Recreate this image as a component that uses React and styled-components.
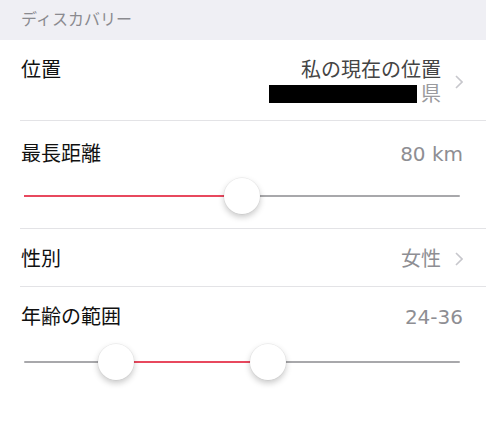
import styled, { createGlobalStyle } from "styled-components";

const GlobalStyle = createGlobalStyle`
  html, body {
    margin: 0;
    padding: 0;
    background: #ffffff;
  }
  body {
    font-family: "Liberation Sans", "Noto Sans CJK JP", sans-serif;
    -webkit-font-smoothing: antialiased;
  }
`;

const Page = styled.div`
  width: 486px;
  height: 428px;
  background: #ffffff;
  overflow: hidden;
`;

const SectionHeader = styled.div`
  height: 40px;
  background: #efeff4;
  color: #8a8a8f;
  font-size: 16px;
  line-height: 40px;
  padding-left: 21px;
  box-sizing: border-box;
`;

const Cell = styled.div`
  margin-left: 20px;
  padding: ${p => p.$pad || "18px 23px 16px 1px"};
  border-bottom: ${p => (p.$last ? "none" : "1px solid #e3e3e6")};
  box-sizing: border-box;
  height: ${p => p.$height}px;
`;

const Line = styled.div`
  display: flex;
  align-items: flex-start;
  justify-content: space-between;
`;

const Label = styled.div`
  font-size: 20px;
  line-height: 24px;
  color: #111;
`;

const Value = styled.div`
  font-family: "DejaVu Sans", "Noto Sans CJK JP", sans-serif;
  font-size: 20px;
  line-height: 24px;
  color: ${p => p.$dark ? "#444" : "#8e8e93"};
  text-align: right;
`;

const ValueGroup = styled.div`
  display: flex;
  align-items: center;
  gap: 14px;
`;

const Stack = styled.div`
  display: flex;
  flex-direction: column;
  align-items: flex-end;
`;

const SubLine = styled.div`
  display: flex;
  align-items: center;
  font-size: 20px;
  line-height: 24px;
  color: #9a9a9e;
`;

const Redacted = styled.span`
  display: inline-block;
  width: 148px;
  height: 18px;
  background: #000;
  margin-right: 4px;
`;

const SliderWrap = styled.div`
  position: relative;
  height: 36px;
  margin: ${p => p.$margin} 3px 0 3px;
`;

const Track = styled.div`
  position: absolute;
  left: 0;
  right: 0;
  top: 17px;
  height: 2px;
  background: #a8a8ab;
  border-radius: 1px;
`;

const Fill = styled.div`
  position: absolute;
  top: 17px;
  height: 2px;
  background: #e8485e;
`;

const Thumb = styled.div`
  position: absolute;
  top: 0;
  width: 36px;
  height: 36px;
  margin-left: -18px;
  border-radius: 50%;
  background: #fff;
  box-shadow: 0 3px 6px rgba(0, 0, 0, 0.22), 0 0 0 0.5px rgba(0, 0, 0, 0.08);
`;

function Chevron() {
  return (
    <svg width="8" height="14" viewBox="0 0 8 14">
      <path d="M1 1 L7 7 L1 13" fill="none" stroke="#c7c7cc" strokeWidth="1.6" />
    </svg>
  );
}

function Slider({ from, to, margin }) {
  const lo = from == null ? 0 : from;
  return (
    <SliderWrap $margin={margin}>
      <Track />
      <Fill style={{ left: `${lo}%`, width: `${to - lo}%` }} />
      {from != null && <Thumb style={{ left: `${from}%` }} />}
      <Thumb style={{ left: `${to}%` }} />
    </SliderWrap>
  );
}

export default function App() {
  return (
    <Page>
      <GlobalStyle />
      <SectionHeader>ディスカバリー</SectionHeader>
      <Cell $height={81}>
        <Line>
          <Label>位置</Label>
          <ValueGroup>
            <Stack>
              <Value $dark>私の現在の位置</Value>
              <SubLine><Redacted />県</SubLine>
            </Stack>
            <Chevron />
          </ValueGroup>
        </Line>
      </Cell>
      <Cell $height={108} $pad="21px 23px 0 1px">
        <Line>
          <Label>最長距離</Label>
          <Value>80 km</Value>
        </Line>
        <Slider to={50} margin="12px" />
      </Cell>
      <Cell $height={58}>
        <Line>
          <Label>性別</Label>
          <ValueGroup>
            <Value>女性</Value>
            <Chevron />
          </ValueGroup>
        </Line>
      </Cell>
      <Cell $last $pad="18px 23px 0 1px">
        <Line>
          <Label>年齢の範囲</Label>
          <Value>24-36</Value>
        </Line>
        <Slider from={21} to={56} margin="15px" />
      </Cell>
    </Page>
  );
}
